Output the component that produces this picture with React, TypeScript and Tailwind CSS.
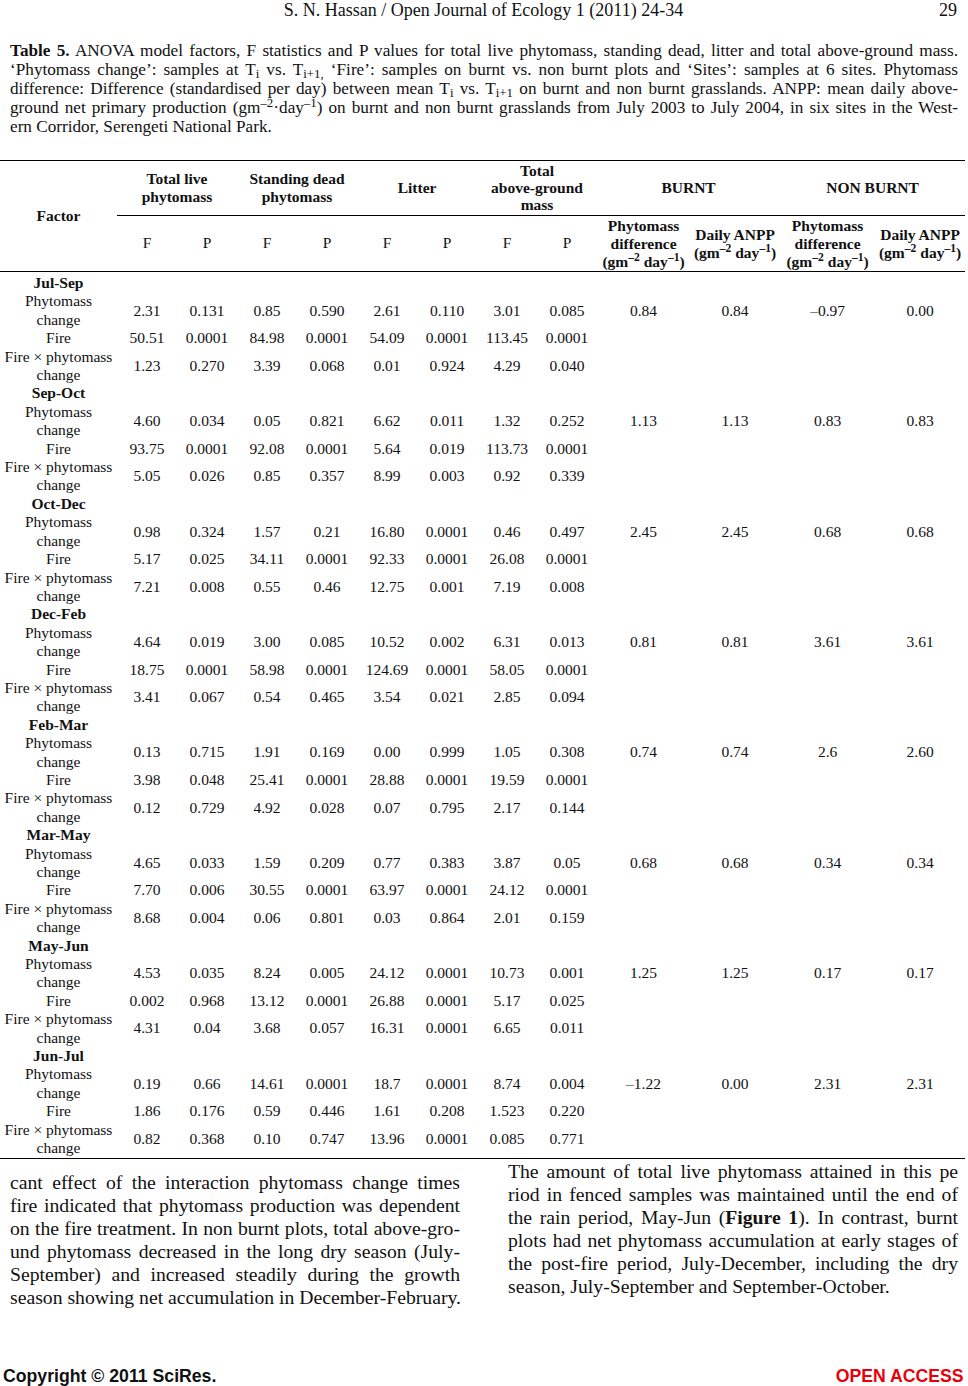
import React from "react";

type Block = {
  label: string;
  pc: string[];
  fire: string[];
  fx: string[];
  right: string[];
};

const blocks: Block[] = [
  {
    label: "Jul-Sep",
    pc: ["2.31", "0.131", "0.85", "0.590", "2.61", "0.110", "3.01", "0.085"],
    fire: ["50.51", "0.0001", "84.98", "0.0001", "54.09", "0.0001", "113.45", "0.0001"],
    fx: ["1.23", "0.270", "3.39", "0.068", "0.01", "0.924", "4.29", "0.040"],
    right: ["0.84", "0.84", "–0.97", "0.00"],
  },
  {
    label: "Sep-Oct",
    pc: ["4.60", "0.034", "0.05", "0.821", "6.62", "0.011", "1.32", "0.252"],
    fire: ["93.75", "0.0001", "92.08", "0.0001", "5.64", "0.019", "113.73", "0.0001"],
    fx: ["5.05", "0.026", "0.85", "0.357", "8.99", "0.003", "0.92", "0.339"],
    right: ["1.13", "1.13", "0.83", "0.83"],
  },
  {
    label: "Oct-Dec",
    pc: ["0.98", "0.324", "1.57", "0.21", "16.80", "0.0001", "0.46", "0.497"],
    fire: ["5.17", "0.025", "34.11", "0.0001", "92.33", "0.0001", "26.08", "0.0001"],
    fx: ["7.21", "0.008", "0.55", "0.46", "12.75", "0.001", "7.19", "0.008"],
    right: ["2.45", "2.45", "0.68", "0.68"],
  },
  {
    label: "Dec-Feb",
    pc: ["4.64", "0.019", "3.00", "0.085", "10.52", "0.002", "6.31", "0.013"],
    fire: ["18.75", "0.0001", "58.98", "0.0001", "124.69", "0.0001", "58.05", "0.0001"],
    fx: ["3.41", "0.067", "0.54", "0.465", "3.54", "0.021", "2.85", "0.094"],
    right: ["0.81", "0.81", "3.61", "3.61"],
  },
  {
    label: "Feb-Mar",
    pc: ["0.13", "0.715", "1.91", "0.169", "0.00", "0.999", "1.05", "0.308"],
    fire: ["3.98", "0.048", "25.41", "0.0001", "28.88", "0.0001", "19.59", "0.0001"],
    fx: ["0.12", "0.729", "4.92", "0.028", "0.07", "0.795", "2.17", "0.144"],
    right: ["0.74", "0.74", "2.6", "2.60"],
  },
  {
    label: "Mar-May",
    pc: ["4.65", "0.033", "1.59", "0.209", "0.77", "0.383", "3.87", "0.05"],
    fire: ["7.70", "0.006", "30.55", "0.0001", "63.97", "0.0001", "24.12", "0.0001"],
    fx: ["8.68", "0.004", "0.06", "0.801", "0.03", "0.864", "2.01", "0.159"],
    right: ["0.68", "0.68", "0.34", "0.34"],
  },
  {
    label: "May-Jun",
    pc: ["4.53", "0.035", "8.24", "0.005", "24.12", "0.0001", "10.73", "0.001"],
    fire: ["0.002", "0.968", "13.12", "0.0001", "26.88", "0.0001", "5.17", "0.025"],
    fx: ["4.31", "0.04", "3.68", "0.057", "16.31", "0.0001", "6.65", "0.011"],
    right: ["1.25", "1.25", "0.17", "0.17"],
  },
  {
    label: "Jun-Jul",
    pc: ["0.19", "0.66", "14.61", "0.0001", "18.7", "0.0001", "8.74", "0.004"],
    fire: ["1.86", "0.176", "0.59", "0.446", "1.61", "0.208", "1.523", "0.220"],
    fx: ["0.82", "0.368", "0.10", "0.747", "13.96", "0.0001", "0.085", "0.771"],
    right: ["–1.22", "0.00", "2.31", "2.31"],
  },
];

function JLine({ children }: { children: React.ReactNode }) {
  return <div className="text-justify [text-align-last:justify]">{children}</div>;
}

function LastLine({ children }: { children: React.ReactNode }) {
  return <div className="text-left whitespace-nowrap">{children}</div>;
}

const Unit = () => (
  <>
    (gm<sup>–2</sup> day<sup>–1</sup>)
  </>
);

function DataRows({ b }: { b: Block }) {
  return (
    <>
      <tr>
        <td className="font-bold">{b.label}</td>
        <td colSpan={12}></td>
      </tr>
      <tr>
        <td>
          Phytomass
          <br />
          change
        </td>
        {b.pc.map((v, i) => (
          <td key={"pc" + i}>{v}</td>
        ))}
        {b.right.map((v, i) => (
          <td key={"r" + i}>{v}</td>
        ))}
      </tr>
      <tr>
        <td>Fire</td>
        {b.fire.map((v, i) => (
          <td key={"f" + i}>{v}</td>
        ))}
        <td colSpan={4}></td>
      </tr>
      <tr>
        <td>
          Fire × phytomass
          <br />
          change
        </td>
        {b.fx.map((v, i) => (
          <td key={"x" + i}>{v}</td>
        ))}
        <td colSpan={4}></td>
      </tr>
    </>
  );
}

export default function App() {
  return (
    <div className="w-[968px] h-[1386px] bg-white flex flex-col font-['Liberation_Serif','Times_New_Roman',serif] text-[#111]">
      {/* running head */}
      <div className="grid grid-cols-[1fr_auto_1fr] items-center h-[20px] leading-[20px] text-[18px] pl-[10px] pr-[11px]">
        <div></div>
        <div>S. N. Hassan / Open Journal of Ecology 1 (2011) 24-34</div>
        <div className="justify-self-end">29</div>
      </div>

      {/* caption */}
      <div className="mt-[20.5px] px-[10px] text-[17.2px] leading-[19.2px]">
        <JLine>
          <b>Table 5.</b> ANOVA model factors, F statistics and P values for total live phytomass, standing dead, litter and total above-ground mass.
        </JLine>
        <JLine>
          ‘Phytomass change’: samples at T<sub>i</sub> vs. T<sub>i+1,</sub> ‘Fire’: samples on burnt vs. non burnt plots and ‘Sites’: samples at 6 sites. Phytomass
        </JLine>
        <JLine>
          difference: Difference (standardised per day) between mean T<sub>i</sub> vs. T<sub>i+1</sub> on burnt and non burnt grasslands. ANPP: mean daily above-
        </JLine>
        <JLine>
          ground net primary production (gm<sup>–2</sup>·day<sup>–1</sup>) on burnt and non burnt grasslands from July 2003 to July 2004, in six sites in the West-
        </JLine>
        <LastLine>ern Corridor, Serengeti National Park.</LastLine>
      </div>

      {/* table */}
      <div className="mt-[23px] w-[965px] border-t-[1.5px] border-b-[1.5px] border-black">
        <table className="w-[965px] table-fixed border-collapse text-[15.5px] leading-[18.4px] text-center [&_td]:p-0 [&_th]:p-0">
          <colgroup>
            <col className="w-[117px]" />
            <col className="w-[60px]" />
            <col className="w-[60px]" />
            <col className="w-[60px]" />
            <col className="w-[60px]" />
            <col className="w-[60px]" />
            <col className="w-[60px]" />
            <col className="w-[60px]" />
            <col className="w-[60px]" />
            <col className="w-[93px]" />
            <col className="w-[90px]" />
            <col className="w-[95px]" />
            <col className="w-[90px]" />
          </colgroup>
          <thead>
            <tr className="h-[55px] font-bold">
              <th rowSpan={2} className="align-middle border-b-[1.5px] border-black">
                Factor
              </th>
              <th colSpan={2} className="border-b border-black leading-[18px]">
                Total live
                <br />
                phytomass
              </th>
              <th colSpan={2} className="border-b border-black leading-[18px]">
                Standing dead
                <br />
                phytomass
              </th>
              <th colSpan={2} className="border-b border-black">
                Litter
              </th>
              <th colSpan={2} className="border-b border-black leading-[17px]">
                Total
                <br />
                above-ground
                <br />
                mass
              </th>
              <th colSpan={2} className="border-b border-black">
                BURNT
              </th>
              <th colSpan={2} className="border-b border-black">
                NON BURNT
              </th>
            </tr>
            <tr className="h-[56px]">
              <th className="font-normal border-b-[1.5px] border-black">F</th>
              <th className="font-normal border-b-[1.5px] border-black">P</th>
              <th className="font-normal border-b-[1.5px] border-black">F</th>
              <th className="font-normal border-b-[1.5px] border-black">P</th>
              <th className="font-normal border-b-[1.5px] border-black">F</th>
              <th className="font-normal border-b-[1.5px] border-black">P</th>
              <th className="font-normal border-b-[1.5px] border-black">F</th>
              <th className="font-normal border-b-[1.5px] border-black">P</th>
              <th className="font-bold border-b-[1.5px] border-black leading-[18px]">
                Phytomass
                <br />
                difference
                <br />
                <Unit />
              </th>
              <th className="font-bold border-b-[1.5px] border-black leading-[18px]">
                Daily ANPP
                <br />
                <Unit />
              </th>
              <th className="font-bold border-b-[1.5px] border-black leading-[18px]">
                Phytomass
                <br />
                difference
                <br />
                <Unit />
              </th>
              <th className="font-bold border-b-[1.5px] border-black leading-[18px]">
                Daily ANPP
                <br />
                <Unit />
              </th>
            </tr>
          </thead>
          <tbody>
            <tr>
              <td colSpan={13} className="h-[2.5px]"></td>
            </tr>
            {blocks.map((b) => (
              <DataRows key={b.label} b={b} />
            ))}
          </tbody>
        </table>
      </div>

      {/* body text */}
      <div className="mt-[1.5px] flex px-[10px] text-[19.7px] leading-[23px]">
        <div className="w-[450px] pt-[11px]">
          <JLine>cant effect of the interaction phytomass change times</JLine>
          <JLine>fire indicated that phytomass production was dependent</JLine>
          <JLine>on the fire treatment. In non burnt plots, total above-gro-</JLine>
          <JLine>und phytomass decreased in the long dry season (July-</JLine>
          <JLine>September) and increased steadily during the growth</JLine>
          <LastLine>season showing net accumulation in December-February.</LastLine>
        </div>
        <div className="w-[450px] ml-[48px]">
          <JLine>The amount of total live phytomass attained in this pe</JLine>
          <JLine>riod in fenced samples was maintained until the end of</JLine>
          <JLine>
            the rain period, May-Jun (<b>Figure 1</b>). In contrast, burnt
          </JLine>
          <JLine>plots had net phytomass accumulation at early stages of</JLine>
          <JLine>the post-fire period, July-December, including the dry</JLine>
          <LastLine>season, July-September and September-October.</LastLine>
        </div>
      </div>

      {/* footer */}
      <div className="mt-auto h-[20px] leading-[20px] flex justify-between items-center pl-[3px] pr-[4px] font-['Liberation_Sans',Arial,sans-serif] font-bold text-[19px]">
        <span className="inline-block origin-left scale-x-[0.93] text-[#111]">Copyright © 2011 SciRes.</span>
        <span className="inline-block origin-right scale-x-[0.93] text-[#e8000b]">OPEN ACCESS</span>
      </div>
    </div>
  );
}
